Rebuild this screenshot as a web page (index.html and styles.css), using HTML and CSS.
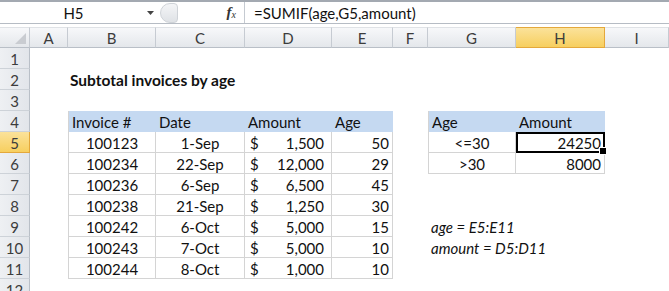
FILE: index.html
```html
<!DOCTYPE html>
<html>
<head>
<meta name="viewport" content="width=device-width, initial-scale=1">
<title>SUMIF by age</title>
<link rel="stylesheet" href="styles.css">
</head>
<body>

<div class="formula-bar">
  <div class="name-box">
    <span>H5</span>
    <svg class="drop" width="7" height="4" viewBox="0 0 7 4"><path d="M0 0h7L3.5 4z" fill="#444"/></svg>
  </div>
  <div class="grip"></div>
  <div class="fx"><i>f</i><small>x</small></div>
  <div class="formula">=SUMIF(age,G5,amount)</div>
</div>

<div class="sheet">
  <!-- column headers -->
  <div class="ch corner"><svg width="11" height="11" viewBox="0 0 11 11"><path d="M11 0v11H0z" fill="#c9ccd1"/></svg></div>
  <div class="ch">A</div>
  <div class="ch">B</div>
  <div class="ch">C</div>
  <div class="ch">D</div>
  <div class="ch">E</div>
  <div class="ch">F</div>
  <div class="ch">G</div>
  <div class="ch sel">H</div>
  <div class="ch">I</div>

  <!-- row 1 -->
  <div class="rh">1</div>
  <div></div><div></div><div></div><div></div><div></div><div></div><div></div><div></div><div></div>

  <!-- row 2 -->
  <div class="rh">2</div>
  <div></div><div class="title">Subtotal invoices by age</div><div></div><div></div><div></div><div></div><div></div><div></div><div></div>

  <!-- row 3 -->
  <div class="rh">3</div>
  <div></div><div></div><div></div><div></div><div></div><div></div><div></div><div></div><div></div>

  <!-- row 4 -->
  <div class="rh">4</div>
  <div></div>
  <div class="th first">Invoice #</div>
  <div class="th">Date</div>
  <div class="th">Amount</div>
  <div class="th">Age</div>
  <div></div>
  <div class="th first">Age</div>
  <div class="th">Amount</div>
  <div></div>

  <!-- row 5 -->
  <div class="rh sel">5</div>
  <div></div>
  <div class="td first center">100123</div>
  <div class="td center">1-Sep</div>
  <div class="td money"><span>$</span><span>1,500</span></div>
  <div class="td right">50</div>
  <div></div>
  <div class="td first center">&lt;=30</div>
  <div class="td right active">24250</div>
  <div></div>

  <!-- row 6 -->
  <div class="rh">6</div>
  <div></div>
  <div class="td first center">100234</div>
  <div class="td center">22-Sep</div>
  <div class="td money"><span>$</span><span>12,000</span></div>
  <div class="td right">29</div>
  <div></div>
  <div class="td first center">&gt;30</div>
  <div class="td right">8000</div>
  <div></div>

  <!-- row 7 -->
  <div class="rh">7</div>
  <div></div>
  <div class="td first center">100236</div>
  <div class="td center">6-Sep</div>
  <div class="td money"><span>$</span><span>6,500</span></div>
  <div class="td right">45</div>
  <div></div><div></div><div></div><div></div>

  <!-- row 8 -->
  <div class="rh">8</div>
  <div></div>
  <div class="td first center">100238</div>
  <div class="td center">21-Sep</div>
  <div class="td money"><span>$</span><span>1,250</span></div>
  <div class="td right">30</div>
  <div></div><div></div><div></div><div></div>

  <!-- row 9 -->
  <div class="rh">9</div>
  <div></div>
  <div class="td first center">100242</div>
  <div class="td center">6-Oct</div>
  <div class="td money"><span>$</span><span>5,000</span></div>
  <div class="td right">15</div>
  <div></div>
  <div class="note">age = E5:E11</div>
  <div></div><div></div>

  <!-- row 10 -->
  <div class="rh">10</div>
  <div></div>
  <div class="td first center">100243</div>
  <div class="td center">7-Oct</div>
  <div class="td money"><span>$</span><span>5,000</span></div>
  <div class="td right">10</div>
  <div></div>
  <div class="note">amount = D5:D11</div>
  <div></div><div></div>

  <!-- row 11 -->
  <div class="rh">11</div>
  <div></div>
  <div class="td first center">100244</div>
  <div class="td center">8-Oct</div>
  <div class="td money"><span>$</span><span>1,000</span></div>
  <div class="td right">10</div>
  <div></div><div></div><div></div><div></div>

  <!-- row 12 -->
  <div class="rh">12</div>
  <div></div><div></div><div></div><div></div><div></div><div></div><div></div><div></div><div></div>
</div>

</body>
</html>
```

FILE: styles.css
```css
* {box-sizing: border-box;}

body {
  margin: 0;
  font-family: Lato, "Open Sans", sans-serif;
  font-size: 15px;
  color: #111;
  background: #fff;
  overflow: hidden;
}

/* formula bar across the top */
.formula-bar {
  height: 24px;
  display: flex;
  align-items: center;
  border-top: 2px solid #a3a9b1;
  border-bottom: 1px solid #b6bcc4;
  margin-bottom: 3px;
}

.name-box {
  width: 160px;
  height: 100%;
  display: flex;
  align-items: center;
}

.name-box span {
  flex: 1;
  text-align: center;
}

.name-box .drop {
  margin-right: 6px;
}

.grip {
  width: 18px;
  height: 20px;
  border-radius: 10px 4px 4px 10px;
  background: linear-gradient(#f4f5f7, #dfe2e6);
  border: 1px solid #cfd3d8;
}

.fx {
  width: 67px;
  height: 100%;
  display: flex;
  align-items: center;
  justify-content: flex-end;
  padding-right: 8px;
  border-right: 1px solid #c5cad1;
  font-family: "Liberation Serif", serif;
  color: #333;
}

.fx i {
  font-size: 15px;
  font-weight: bold;
}

.fx small {
  font-size: 10px;
  font-style: italic;
  margin-top: 4px;
}

.formula {
  padding-left: 9px;
}

/* worksheet grid */
.sheet {
  display: grid;
  grid-template-columns: 30px 38px 88px 89px 87px 61px 35px 88px 89px 64px;
  grid-auto-rows: 21px;
  line-height: 23px;
  white-space: nowrap;
}

.ch {
  background: linear-gradient(#f7f8fa, #e4e7eb);
  border-right: 1px solid #c6cbd2;
  border-bottom: 1px solid #b9bfc7;
  border-top: 1px solid #dfe2e6;
  text-align: center;
  color: #3c3c3c;
  line-height: 21px;
}

.corner {
  display: flex;
  align-items: flex-end;
  justify-content: flex-end;
  padding: 0 3px 3px 0;
}

.rh {
  background: linear-gradient(90deg, #eef0f3, #e2e5ea);
  border-right: 1px solid #b9bfc7;
  border-bottom: 1px solid #cdd2d8;
  text-align: center;
  color: #3c3c3c;
}

.ch.sel, .rh.sel {
  background: linear-gradient(#fbe29a, #f7cf5f);
  border-color: #e4a83b;
}

.title {
  font-weight: bold;
  font-size: 15.5px;
  padding-left: 2px;
}

.th {
  background: #c5d9f1;
  padding-left: 3px;
}

.td {
  border-right: 1px solid #d4d4d4;
  border-bottom: 1px solid #d4d4d4;
  padding: 0 3px;
}

.first {
  border-left: 1px solid #d4d4d4;
}

.center {text-align: center;}
.right {text-align: right;}

.money {
  display: flex;
  justify-content: space-between;
  padding: 0 7px 0 5px;
}

.active {
  position: relative;
  border: 2px solid #000;
  line-height: 19px;
  padding-right: 2px;
}

/* fill handle */
.active::after {
  content: "";
  position: absolute;
  right: -4px;
  bottom: -4px;
  width: 6px;
  height: 6px;
  background: #000;
  border: 1px solid #fff;
}

.note {
  font-style: italic;
  padding-left: 3px;
}
```
